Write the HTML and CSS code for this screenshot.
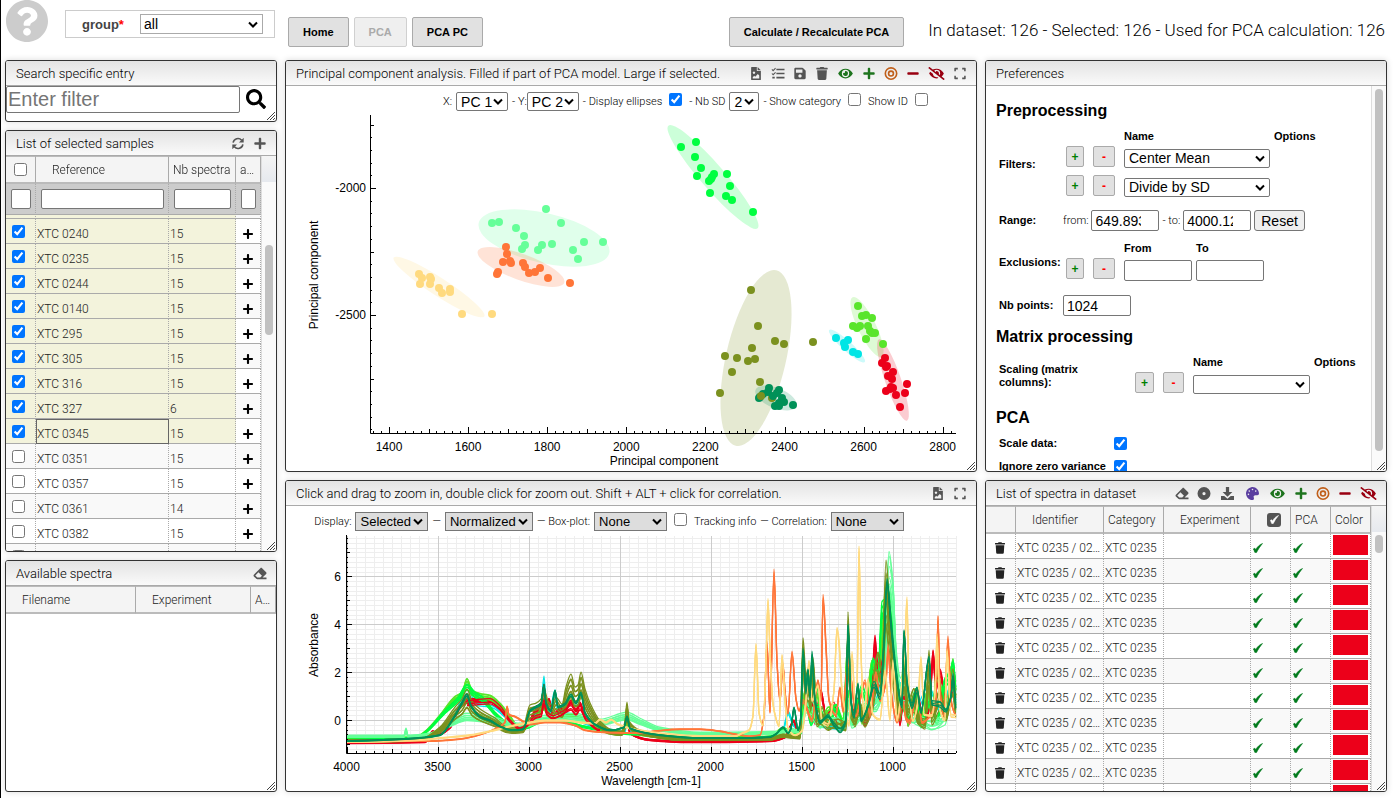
FILE: index.html
```
<!DOCTYPE html>
<html lang="en">
<head>
    <meta charset="UTF-8">
    <meta name="viewport" content="width=device-width, initial-scale=1.0">
    <title>PCA</title>
    <link rel="stylesheet" href="styles.css">
</head>
<body>
    <svg class="sprite" aria-hidden="true">
        <symbol id="i-help" viewBox="8 8 496 496"><path d="M504 256c0 136.997-111.043 248-248 248S8 392.997 8 256C8 119.083 119.043 8 256 8s248 111.083 248 248zM262.655 90c-54.497 0-89.255 22.957-116.549 63.758-3.536 5.286-2.353 12.415 2.715 16.258l34.699 26.31c5.205 3.947 12.621 3.008 16.665-2.122 17.864-22.658 30.113-35.797 57.303-35.797 20.429 0 45.698 13.148 45.698 32.958 0 14.976-12.363 22.667-32.534 33.976C247.128 238.528 216 254.941 216 296v4c0 6.627 5.373 12 12 12h56c6.627 0 12-5.373 12-12v-1.333c0-28.462 83.186-29.647 83.186-106.667 0-58.002-60.165-102-116.531-102zM256 338c-25.365 0-46 20.635-46 46 0 25.364 20.635 46 46 46s46-20.636 46-46c0-25.364-20.635-46-46-46z"/></symbol>
        <symbol id="i-search" viewBox="0 0 512 512"><path d="M505 442.7L405.3 343c-4.5-4.5-10.6-7-17-7H372c27.6-35.3 44-79.7 44-128C416 93.1 322.9 0 208 0S0 93.1 0 208s93.1 208 208 208c48.3 0 92.7-16.4 128-44v16.3c0 6.4 2.5 12.5 7 17l99.7 99.7c9.4 9.4 24.6 9.4 33.9 0l28.3-28.3c9.4-9.4 9.4-24.6.1-34zM208 336c-70.7 0-128-57.2-128-128 0-70.7 57.2-128 128-128 70.7 0 128 57.2 128 128 0 70.7-57.2 128-128 128z"/></symbol>
        <symbol id="i-sync" viewBox="0 0 16 16"><path d="M2 7a6 6 0 0 1 10.5-3M14 9a6 6 0 0 1-10.5 3" fill="none" stroke="currentColor" stroke-width="1.9"/><path d="M15 1v5.8H9.2zM1 15V9.2h5.8z"/></symbol>
        <symbol id="i-plus" viewBox="0 0 448 512"><path d="M416 208H272V64c0-17.67-14.33-32-32-32h-32c-17.67 0-32 14.33-32 32v144H32c-17.67 0-32 14.33-32 32v32c0 17.67 14.33 32 32 32h144v144c0 17.67 14.33 32 32 32h32c17.67 0 32-14.33 32-32V304h144c17.67 0 32-14.33 32-32v-32c0-17.67-14.33-32-32-32z"/></symbol>
        <symbol id="i-minus" viewBox="0 0 448 512"><path d="M416 208H32c-17.67 0-32 14.33-32 32v32c0 17.67 14.33 32 32 32h384c17.67 0 32-14.33 32-32v-32c0-17.67-14.33-32-32-32z"/></symbol>
        <symbol id="i-eye" viewBox="0 0 576 512"><path d="M572.52 241.4C518.29 135.59 410.93 64 288 64S57.68 135.64 3.48 241.41a32.35 32.35 0 0 0 0 29.19C57.71 376.41 165.07 448 288 448s230.32-71.64 284.52-177.41a32.35 32.35 0 0 0 0-29.19zM288 400a144 144 0 1 1 144-144 143.93 143.93 0 0 1-144 144zm0-240a95.31 95.31 0 0 0-25.31 3.79 47.85 47.85 0 0 1-66.9 66.9A95.78 95.78 0 1 0 288 160z"/></symbol>
        <symbol id="i-eye-slash" viewBox="0 0 640 512"><path d="M320 400c-75.85 0-137.25-58.71-142.9-133.11L72.2 185.82c-13.79 17.3-26.48 35.59-36.72 55.59a32.35 32.35 0 0 0 0 29.19C89.71 376.41 197.07 448 320 448c26.91 0 52.87-4 77.89-10.46L346 397.39a144.13 144.13 0 0 1-26 2.61zm313.82 58.1l-110.55-85.44a331.25 331.25 0 0 0 81.25-102.07 32.35 32.35 0 0 0 0-29.19C550.29 135.59 442.93 64 320 64a308.15 308.15 0 0 0-147.32 37.7L45.46 3.37A16 16 0 0 0 23 6.18L3.37 31.45A16 16 0 0 0 6.18 53.9l588.36 454.73a16 16 0 0 0 22.46-2.81l19.64-25.27a16 16 0 0 0-2.82-22.45zm-183.72-142l-39.3-30.38A94.75 94.75 0 0 0 416 256a94.76 94.76 0 0 0-121.31-92.21A47.65 47.65 0 0 1 304 192a46.64 46.64 0 0 1-1.54 10l-73.61-56.89A142.31 142.31 0 0 1 320 112a143.92 143.92 0 0 1 144 144c0 21.63-5.29 41.79-13.9 60.11z"/></symbol>
        <symbol id="i-trash" viewBox="0 0 448 512"><path d="M432 32H312l-9.4-18.7A24 24 0 0 0 281.1 0H166.8a23.72 23.72 0 0 0-21.4 13.3L136 32H16A16 16 0 0 0 0 48v32a16 16 0 0 0 16 16h416a16 16 0 0 0 16-16V48a16 16 0 0 0-16-16zM53.2 467a48 48 0 0 0 47.9 45h245.8a48 48 0 0 0 47.9-45L416 128H32z"/></symbol>
        <symbol id="i-save" viewBox="0 0 448 512"><path d="M433.941 129.941l-83.882-83.882A48 48 0 0 0 316.118 32H48C21.49 32 0 53.49 0 80v352c0 26.51 21.49 48 48 48h352c26.51 0 48-21.49 48-48V163.882a48 48 0 0 0-14.059-33.941zM224 416c-35.346 0-64-28.654-64-64s28.654-64 64-64 64 28.654 64 64-28.654 64-64 64zm96-304.52V212c0 6.627-5.373 12-12 12H76c-6.627 0-12-5.373-12-12V108c0-6.627 5.373-12 12-12h228.52c3.183 0 6.235 1.264 8.485 3.515l3.48 3.48A11.996 11.996 0 0 1 320 111.48z"/></symbol>
        <symbol id="i-expand" viewBox="0 0 448 512"><path d="M0 170V56c0-13 11-24 24-24h114v62H62v76zM310 32h114c13 0 24 11 24 24v114h-62V94h-76zM386 342h62v114c0 13-11 24-24 24H310v-62h76zM138 480H24c-13 0-24-11-24-24V342h62v76h76z"/></symbol>
        <symbol id="i-eraser" viewBox="0 0 512 512"><path d="M497.941 273.941c18.745-18.745 18.745-49.137 0-67.882l-160-160c-18.745-18.745-49.136-18.746-67.883 0l-256 256c-18.745 18.745-18.745 49.137 0 67.882l96 96A48.004 48.004 0 0 0 144 480h356c6.627 0 12-5.373 12-12v-40c0-6.627-5.373-12-12-12H355.883l142.058-142.059zm-302.627-62.627l137.373 137.373L265.373 416H150.628l-80-80 124.686-124.686z"/></symbol>
        <symbol id="i-palette" viewBox="0 0 512 512"><path d="M204.3 5C104.9 24.4 24.8 104.3 5.2 203.4c-37 187 131.7 326.4 258.8 306.7 41.2-6.4 61.4-54.6 42.5-91.7-23.1-45.4 9.9-98.4 60.9-98.4h79.7c35.8 0 64.8-29.6 64.9-65.3C511.5 97.1 368.1-26.9 204.3 5zM96 320c-17.7 0-32-14.3-32-32s14.3-32 32-32 32 14.3 32 32-14.3 32-32 32zm32-128c-17.7 0-32-14.3-32-32s14.3-32 32-32 32 14.3 32 32-14.3 32-32 32zm128-64c-17.7 0-32-14.3-32-32s14.3-32 32-32 32 14.3 32 32-14.3 32-32 32zm128 64c-17.7 0-32-14.3-32-32s14.3-32 32-32 32 14.3 32 32-14.3 32-32 32z"/></symbol>
        <symbol id="i-file" viewBox="0 0 384 512"><path fill-rule="evenodd" d="M24 0h200v136c0 13 11 24 24 24h136v328c0 13-11 24-24 24H24c-13 0-24-11-24-24V24C0 11 11 0 24 0zM256 0l128 128H256zM112 176a48 48 0 1 0 .1 0zM64 448h256V336l-56-56-104 104-40-40-56 56z"/></symbol>
        <symbol id="i-tasks" viewBox="0 0 16 16"><path d="M6 2h10v2H6zM6 7h10v2H6zM6 12h10v2H6zM1 12h3v2H1z"/><path d="M.5 3l1.5 1.5L5 1.5M.5 8L2 9.5 5 6.5" fill="none" stroke="currentColor" stroke-width="1.3"/></symbol>
        <symbol id="i-target" viewBox="0 0 16 16"><g fill="none" stroke="currentColor" stroke-width="2"><circle cx="8" cy="8" r="7"/><circle cx="8" cy="8" r="3"/></g></symbol>
        <symbol id="i-dot" viewBox="0 0 16 16"><circle cx="8" cy="8" r="5" fill="none" stroke="currentColor" stroke-width="6"/></symbol>
        <symbol id="i-download" viewBox="0 0 16 16"><path d="M6 0h4v6h4l-6 6-6-6h4zM0 11h4l4 3.5 4-3.5h4v5H0z"/></symbol>
        <symbol id="i-check" viewBox="0 0 10 10"><path d="M.3 6.2C1 5 2 5 2.9 6.6 4.3 3.8 6.5 1.6 9.5.5 7 3.5 5 6.5 3.5 9.6 2.5 9.9 2 9.7 1.7 9.3 1.4 8 1 7 .3 6.2z" stroke="currentColor" stroke-width=".6"/></symbol>
        <symbol id="i-grip" viewBox="0 0 8 8"><path d="M0 8L8 0M3 8L8 3M6 8L8 6" stroke="#444" fill="none"/></symbol>
    </svg>

    <header class="topbar">
        <div class="topbar-left">
            <a href="#" class="help" aria-label="Help"><svg><use href="#i-help"/></svg></a>
            <form class="group-form">
                <label for="group">group<span class="required">*</span></label>
                <select id="group"><option>all</option></select>
            </form>
        </div>
        <nav class="nav">
            <button type="button" class="btn">Home</button>
            <button type="button" class="btn" disabled>PCA</button>
            <button type="button" class="btn">PCA PC</button>
        </nav>
        <button type="button" class="btn">Calculate / Recalculate PCA</button>
        <div class="stats">In dataset: 126 - Selected: 126 - Used for PCA calculation: 126</div>
    </header>

    <main class="board">
        <div class="column column-left">
            <section class="panel">
                <div class="panel-head"><h1>Search specific entry</h1></div>
                <div class="search">
                    <input type="text" placeholder="Enter filter" aria-label="Filter">
                    <svg class="search-icon"><use href="#i-search"/></svg>
                </div>
                <svg class="grip"><use href="#i-grip"/></svg>
            </section>

            <section class="panel">
                <div class="panel-head">
                    <h1>List of selected samples</h1>
                    <div class="tools">
                        <svg><use href="#i-sync"/></svg>
                        <svg><use href="#i-plus"/></svg>
                    </div>
                </div>
                <div class="grid">
                    <div class="grid-view" id="samplesView">
                        <table class="samples">
                            <colgroup><col class="c-check"><col><col class="c-nb"><col class="c-add"></colgroup>
                            <thead>
                                <tr>
                                    <th class="center"><input type="checkbox" aria-label="Select all"></th>
                                    <th class="indent">Reference</th>
                                    <th>Nb spectra</th>
                                    <th>a…</th>
                                </tr>
                                <tr class="filters">
                                    <td><input type="text" aria-label="Filter selection"></td>
                                    <td><input type="text" aria-label="Filter reference"></td>
                                    <td><input type="text" aria-label="Filter nb spectra"></td>
                                    <td><input type="text" aria-label="Filter add"></td>
                                </tr>
                            </thead>
                            <tbody id="samples"></tbody>
                        </table>
                    </div>
                    <div class="scroll scroll-samples"><div class="thumb"></div></div>
                </div>
                <svg class="grip"><use href="#i-grip"/></svg>
            </section>

            <section class="panel">
                <div class="panel-head">
                    <h1>Available spectra</h1>
                    <div class="tools"><svg><use href="#i-eraser"/></svg></div>
                </div>
                <table class="available">
                    <colgroup><col><col class="c-exp"><col class="c-a"></colgroup>
                    <thead><tr><th>Filename</th><th>Experiment</th><th class="tight">A…</th></tr></thead>
                </table>
                <svg class="grip"><use href="#i-grip"/></svg>
            </section>
        </div>

        <div class="column column-mid">
            <section class="panel">
                <div class="panel-head">
                    <h1>Principal component analysis. Filled if part of PCA model. Large if selected.</h1>
                    <div class="tools">
                        <svg><use href="#i-file"/></svg>
                        <svg><use href="#i-tasks"/></svg>
                        <svg><use href="#i-save"/></svg>
                        <svg><use href="#i-trash"/></svg>
                        <svg class="green wide"><use href="#i-eye"/></svg>
                        <svg class="green"><use href="#i-plus"/></svg>
                        <svg class="orange"><use href="#i-target"/></svg>
                        <svg class="red"><use href="#i-minus"/></svg>
                        <svg class="red wide"><use href="#i-eye-slash"/></svg>
                        <svg><use href="#i-expand"/></svg>
                    </div>
                </div>
                <div class="options pca-options">
                    <label for="pcx">X:</label>
                    <select id="pcx" class="w52"><option>PC 1</option></select>
                    <label for="pcy" class="snug">- Y:</label>
                    <select id="pcy" class="w52"><option>PC 2</option></select>
                    <label for="ellipses">- Display ellipses</label>
                    <input type="checkbox" id="ellipses" checked>
                    <label for="sd">- Nb SD</label>
                    <select id="sd" class="w30"><option>2</option></select>
                    <label for="cat">- Show category</label>
                    <input type="checkbox" id="cat">
                    <label for="showid">Show ID</label>
                    <input type="checkbox" id="showid">
                </div>
                <svg class="chart" id="pca" viewBox="286 112 690 359"></svg>
                <svg class="grip"><use href="#i-grip"/></svg>
            </section>

            <section class="panel">
                <div class="panel-head">
                    <h1>Click and drag to zoom in, double click for zoom out. Shift + ALT + click for correlation.</h1>
                    <div class="tools">
                        <svg><use href="#i-file"/></svg>
                        <svg><use href="#i-expand"/></svg>
                    </div>
                </div>
                <div class="options spectra-options">
                    <label for="display">Display:</label>
                    <select id="display" class="w73"><option>Selected</option></select>
                    <span>—</span>
                    <select class="w88" aria-label="Scaling"><option>Normalized</option></select>
                    <label for="box">— Box-plot:</label>
                    <select id="box" class="w73"><option>None</option></select>
                    <input type="checkbox" id="tracking">
                    <label for="tracking">Tracking info</label>
                    <label for="corr">— Correlation:</label>
                    <select id="corr" class="w73"><option>None</option></select>
                </div>
                <svg class="chart" id="spectra" viewBox="286 532 690 259"></svg>
                <svg class="grip"><use href="#i-grip"/></svg>
            </section>
        </div>

        <div class="column column-right">
            <section class="panel">
                <div class="panel-head"><h1>Preferences</h1></div>
                <div class="grid">
                    <form class="prefs">
                        <h2>Preprocessing</h2>
                        <div class="field">
                            <b>Filters:</b>
                            <div class="items">
                                <b class="on-name">Name</b><b>Options</b>
                                <button type="button" class="add">+</button><button type="button" class="del">-</button>
                                <select aria-label="Filter 1"><option>Center Mean</option></select><span></span>
                                <button type="button" class="add">+</button><button type="button" class="del">-</button>
                                <select aria-label="Filter 2"><option>Divide by SD</option></select><span></span>
                            </div>
                        </div>
                        <div class="field range-field">
                            <b>Range:</b>
                            <div class="inline">
                                <label for="from">from:</label>
                                <input type="text" id="from" class="clip" value="649.893">
                                <label for="to">- to:</label>
                                <input type="text" id="to" class="clip" value="4000.12">
                                <button type="button" class="reset">Reset</button>
                            </div>
                        </div>
                        <div class="field">
                            <b>Exclusions:</b>
                            <div class="items exclusions">
                                <b class="on-name">From</b><b>To</b>
                                <button type="button" class="add">+</button><button type="button" class="del">-</button>
                                <input type="text" aria-label="Exclusion from"><input type="text" aria-label="Exclusion to">
                            </div>
                        </div>
                        <div class="field points-field">
                            <label for="nb"><b>Nb points:</b></label>
                            <div class="inline"><input type="text" id="nb" value="1024"></div>
                        </div>
                        <h2 class="h-matrix">Matrix processing</h2>
                        <div class="field matrix">
                            <b>Scaling (matrix columns):</b>
                            <div class="items">
                                <b class="on-name">Name</b><b>Options</b>
                                <button type="button" class="add">+</button><button type="button" class="del">-</button>
                                <select aria-label="Scaling"><option></option></select><span></span>
                            </div>
                        </div>
                        <h2 class="h-pca">PCA</h2>
                        <div class="field tick">
                            <label for="scale"><b>Scale data:</b></label>
                            <input type="checkbox" id="scale" checked>
                        </div>
                        <div class="field tick">
                            <label for="ignore"><b>Ignore zero variance</b></label>
                            <input type="checkbox" id="ignore" checked>
                        </div>
                    </form>
                    <div class="scroll scroll-prefs"><div class="thumb"></div></div>
                </div>
                <svg class="grip"><use href="#i-grip"/></svg>
            </section>

            <section class="panel">
                <div class="panel-head">
                    <h1>List of spectra in dataset</h1>
                    <div class="tools">
                        <svg><use href="#i-eraser"/></svg>
                        <svg><use href="#i-dot"/></svg>
                        <svg class="wide"><use href="#i-download"/></svg>
                        <svg class="purple wide"><use href="#i-palette"/></svg>
                        <svg class="green wide"><use href="#i-eye"/></svg>
                        <svg class="green"><use href="#i-plus"/></svg>
                        <svg class="orange"><use href="#i-target"/></svg>
                        <svg class="red"><use href="#i-minus"/></svg>
                        <svg class="red wide"><use href="#i-eye-slash"/></svg>
                    </div>
                </div>
                <div class="grid">
                    <div class="grid-view">
                        <table class="dataset">
                            <colgroup><col class="c-check"><col class="c-id"><col class="c-cat"><col><col class="c-sel"><col class="c-sel"><col class="c-sel"></colgroup>
                            <thead>
                                <tr>
                                    <th></th>
                                    <th class="indent">Identifier</th>
                                    <th>Category</th>
                                    <th class="indent">Experiment</th>
                                    <th class="right"><span class="ticked"><svg><use href="#i-check"/></svg></span></th>
                                    <th>PCA</th>
                                    <th>Color</th>
                                </tr>
                            </thead>
                            <tbody id="dataset"></tbody>
                        </table>
                    </div>
                    <div class="scroll scroll-dataset"><div class="thumb"></div></div>
                </div>
                <svg class="grip"><use href="#i-grip"/></svg>
            </section>
        </div>
    </main>

    <script src="script.js"></script>
</body>
</html>
```
FILE: styles.css
```
* {
    box-sizing: border-box;
}
body {
    margin: 0;
    height: 100vh;
    min-height: 600px;
    display: flex;
    flex-direction: column;
    border-left: 1px solid #000;
    background-color: #fff;
    font-family: Roboto, "Liberation Sans", sans-serif;
    font-weight: 300;
    font-size: 11px;
    color: #000;
}
svg {
    fill: currentColor;
}
.sprite {
    position: absolute;
    width: 0;
    height: 0;
}
input, select, button {
    font-family: "Liberation Sans", Arial, sans-serif;
    margin: 0;
}
input[type="text"] {
    border: 1px solid #767676;
    border-radius: 2px;
    min-width: 0;
}
input[type="checkbox"] {
    width: 13px;
    height: 13px;
}
select {
    appearance: none;
    height: 19px;
    padding: 0 4px;
    border: 1px solid #767676;
    border-radius: 2px;
    color: #000;
    background: #fff url("data:image/svg+xml,%3Csvg xmlns='http://www.w3.org/2000/svg' viewBox='0 0 10 7'%3E%3Cpath d='M1 1.5l4 4 4-4' fill='none' stroke='%23000' stroke-width='2'/%3E%3C/svg%3E") no-repeat right 4px center / 10px 7px;
    font-size: 14px;
}

/* top bar */
.topbar {
    height: 60px;
    flex: none;
    display: flex;
    align-items: flex-start;
    padding: 0 13px 0 5px;
}
.topbar-left {
    display: flex;
    width: 282px;
}
.help {
    color: #ccc;
    height: 42px;
}
.help svg {
    width: 42px;
    height: 42px;
}
.group-form {
    display: flex;
    align-items: center;
    width: 210px;
    height: 28px;
    margin: 10px 0 0 17px;
    padding: 0 11px 0 16px;
    border: 1px solid #ccc;
}
.group-form label {
    flex: 1;
    font: bold 13px "Liberation Sans", sans-serif;
    color: #444;
}
.group-form select {
    width: 123px;
    height: 20px;
    padding-left: 3px;
    border-color: #aaa;
    border-radius: 0;
}
.required {
    color: #f00;
}
.nav {
    display: flex;
    gap: 5px;
    flex: 1;
}
.btn {
    height: 30px;
    margin-top: 17px;
    padding: 0 14px;
    border: 1px solid #aaa;
    border-radius: 2px;
    background-color: #e1e1e1;
    color: #000;
    font-size: 11px;
    font-weight: bold;
}
.btn:disabled {
    border-color: #d0d0d0;
    background-color: #efefef;
    color: #aaa;
}
.stats {
    margin: 20px 0 0 24px;
    font-size: 17px;
    line-height: 20px;
    white-space: nowrap;
}

/* board */
.board {
    flex: 1;
    min-height: 0;
    display: grid;
    grid-template-columns: 272px minmax(0, 1fr) 402px;
    gap: 8px;
    padding: 0 11px 6px 4px;
}
.column {
    display: grid;
    gap: 8px;
    min-height: 0;
}
.column-left {
    grid-template-rows: 62px minmax(0, 422fr) minmax(0, 232fr);
}
.column-mid, .column-right {
    grid-template-rows: minmax(0, 412fr) minmax(0, 312fr);
}
.panel {
    position: relative;
    display: flex;
    flex-direction: column;
    min-width: 0;
    overflow: hidden;
    border: 1px solid #333;
    border-radius: 3px;
    background-color: #fff;
    box-shadow: 0 0 6px rgba(0, 0, 0, 0.15);
}
.panel-head {
    flex: none;
    display: flex;
    align-items: center;
    justify-content: space-between;
    height: 25px;
    padding: 0 9px 0 10px;
    border-bottom: 1px solid #aaa;
    background: linear-gradient(#e3e3e3, #fafafa);
}
.panel-head h1 {
    margin: 0;
    font-size: 13px;
    font-weight: 300;
    white-space: nowrap;
}
.tools {
    display: flex;
    align-items: center;
    gap: 8px;
    color: #555;
}
.tools svg {
    width: 14px;
    height: 13px;
}
.tools .wide {
    width: 17px;
}
.green {
    color: #1e741e;
}
.orange {
    color: #c05f1a;
}
.red {
    color: #990011;
}
.purple {
    color: #5b3fa0;
}
.grip {
    position: absolute;
    right: 1px;
    bottom: 1px;
    width: 8px;
    height: 8px;
}

.search {
    display: flex;
    gap: 6px;
}
.search input {
    width: 234px;
    height: 27px;
    padding: 0 1px;
    font-size: 20px;
}
.search-icon {
    width: 20px;
    height: 20px;
    margin-top: 3px;
}

/* tables */
.grid {
    flex: 1;
    min-height: 0;
    display: flex;
}
.grid-view {
    flex: 1;
    min-width: 0;
    overflow: hidden;
}
table {
    width: 100%;
    table-layout: fixed;
    border-collapse: separate;
    border-spacing: 0;
    font-size: 12px;
    color: #222;
}
thead {
    position: sticky;
    top: 0;
    z-index: 1;
}
th {
    height: 28px;
    padding: 0 4px;
    border-top: 1px solid #bbb;
    border-bottom: 2px solid #bbb;
    border-right: 1px solid #aaa;
    background-color: #f4f4f4;
    font-weight: 300;
    text-align: left;
    white-space: nowrap;
}
td {
    height: 25px;
    padding: 5px 0 0 1px;
    border-bottom: 1px solid #aaa;
    border-right: 1px dotted #aaa;
    line-height: 18px;
    white-space: nowrap;
    overflow: hidden;
    text-overflow: ellipsis;
}
th.indent {
    padding-left: 16px;
}
th.center {
    padding-top: 3px;
    text-align: center;
}
th.right {
    text-align: right;
    padding-right: 9px;
}
td svg {
    display: block;
}
.filters td {
    height: 31px;
    padding: 0 4px 0 5px;
    background-color: #ccc;
}
.filters input {
    display: block;
    width: 100%;
    height: 20px;
}
.c-check {
    width: 30px;
}
.c-nb {
    width: 67px;
}
.c-add {
    width: 25px;
}
.samples tbody tr:nth-child(odd) td {
    background-color: #f9f9f9;
}
.samples tbody tr.on td:not(:last-child) {
    background-color: #f3f3dc;
}
.samples tbody td:first-child {
    padding: 0;
    text-align: center;
}
.samples tbody td input {
    display: block;
    margin: 0 0 0 6px;
}
.samples tbody td:last-child {
    background-color: #fff;
    color: #000;
    padding-left: 7px;
}
.samples td svg {
    width: 10px;
    height: 12px;
}
.samples tbody td.active {
    outline: 1px solid #666;
    outline-offset: -1px;
}
.available th {
    padding-left: 16px;
}
.available th.tight {
    padding-left: 4px;
}
.c-exp {
    width: 115px;
}
.c-a {
    width: 25px;
}
.c-id {
    width: 88px;
}
.c-cat {
    width: 60px;
}
.c-sel {
    width: 40px;
}
.dataset tbody tr:nth-child(even) td {
    background-color: #f9f9f9;
}
.dataset td {
    padding-top: 4px;
}
.dataset td svg {
    width: 10px;
    height: 12px;
    margin-left: 8px;
    color: #222;
}
.dataset td svg.ok {
    height: 10px;
    margin-left: 1px;
    color: #007a1c;
}
.dataset td.swatch {
    padding: 0 2px 2px;
}
.swatch div {
    height: 20px;
    background-color: #ec001a;
}
.ticked {
    display: inline-flex;
    align-items: center;
    justify-content: center;
    width: 14px;
    height: 14px;
    border-radius: 3px;
    background-color: #555;
    color: #fff;
    vertical-align: middle;
}
.ticked svg {
    width: 9px;
    height: 9px;
}
.scroll {
    flex: none;
    width: 15px;
    padding-left: 3px;
    border-left: 1px solid #ddd;
    background-color: #fafafa;
}
.scroll-samples, .scroll-dataset {
    background: linear-gradient(#f4f4f4, #e6e9ee) no-repeat #fafafa;
    background-size: 100% 26px;
}
.thumb {
    width: 8px;
    border-radius: 4px;
    background-color: #c1c1c1;
}
.scroll-samples .thumb {
    height: 90px;
    margin-top: 89px;
}
.scroll-dataset .thumb {
    height: 18px;
    margin-top: 29px;
}
.scroll-prefs .thumb {
    height: 94%;
    margin-top: 3px;
}

/* charts */
.options {
    flex: none;
    display: flex;
    align-items: center;
    justify-content: center;
    gap: 4px;
    height: 26px;
    padding-top: 5px;
    color: #000;
    white-space: nowrap;
}
.pca-options {
    padding-left: 112px;
}
.spectra-options {
    padding-right: 44px;
}
.options .snug {
    margin-right: -4px;
}
.options input {
    margin: 0 3px 4px 3px;
}
.w52 {
    width: 52px;
}
.w30 {
    width: 30px;
}
.w73 {
    width: 73px;
}
.w88 {
    width: 88px;
}
.spectra-options select {
    background-color: #ddd;
    border-radius: 0;
    font-size: 13px;
}
.chart {
    flex: 1;
    min-height: 0;
    width: 100%;
    font-family: "Liberation Sans", Arial, sans-serif;
    font-weight: 400;
    font-size: 12px;
}
.axis {
    fill: none;
    stroke: #000;
}
.minor {
    stroke: #eee;
}
.major {
    stroke: #ccc;
}
.middle {
    text-anchor: middle;
}
.end {
    text-anchor: end;
}
.line {
    fill: none;
    stroke-width: 1.3;
    stroke-linejoin: round;
}

/* preferences */
.prefs {
    flex: 1;
    min-width: 0;
    padding: 0 8px 0 10px;
    overflow: hidden;
}
.prefs h2 {
    margin: 15px 0 9px;
    font: bold 16px/20px "Liberation Sans", sans-serif;
}
.prefs b {
    font: bold 11px/13px "Liberation Sans", sans-serif;
}
.field {
    display: grid;
    grid-template-columns: 64px 1fr;
    align-items: center;
    padding-left: 3px;
}
.items {
    display: grid;
    grid-template-columns: 18px 22px 146px 1fr;
    gap: 5px 9px;
    padding-left: 3px;
    align-items: center;
}
.items b {
    margin-bottom: -2px;
}
.items .on-name {
    grid-column: 3;
}
.items b:nth-child(2), .exclusions input:last-child {
    margin-left: -5px;
}
.exclusions {
    grid-template-columns: 18px 22px 68px 68px;
}
.matrix {
    grid-template-columns: 133px 1fr;
}
.matrix .items {
    grid-template-columns: 19px 21px 117px 1fr;
}
.prefs input[type="text"] {
    width: 68px;
    height: 21px;
    padding: 0 3px;
    font-size: 14px;
}
.prefs input.clip {
    padding-right: 17px;
}
.add, .del {
    height: 21px;
    margin-bottom: 3px;
    padding: 0;
    border: 1px solid #aaa;
    border-radius: 2px;
    background-color: #e1e1e1;
    color: #008000;
    font-size: 12px;
    font-weight: bold;
}
.del {
    color: #f00;
}
.inline {
    display: flex;
    align-items: center;
    gap: 3px;
}
.range-field {
    margin: 11px 0;
}
.points-field {
    margin-top: 13px;
}
.prefs h2.h-matrix {
    margin-top: 11px;
}
.prefs h2.h-pca {
    margin: 12px 0 4px;
}
.reset {
    height: 21px;
    padding: 0 6px;
    border: 1px solid #767676;
    border-radius: 3px;
    background-color: #efefef;
    color: #000;
    font-size: 14px;
}
.tick {
    grid-template-columns: 115px 1fr;
    height: 23px;
}
```
FILE: script.js
```
const samples = [
    ['XTC 0236', 15, true], ['XTC 0240', 15, true], ['XTC 0235', 15, true], ['XTC 0244', 15, true],
    ['XTC 0140', 15, true], ['XTC 295', 15, true], ['XTC 305', 15, true], ['XTC 316', 15, true],
    ['XTC 327', 6, true], ['XTC 0345', 15, true], ['XTC 0351', 15], ['XTC 0357', 15],
    ['XTC 0361', 14], ['XTC 0382', 15], ['XTC 0390', 15]
];

document.getElementById('samples').innerHTML = samples.map(([name, nb, on]) => `
    <tr class="${on ? 'on' : ''}">
        <td><input type="checkbox" aria-label="${name}" ${on ? 'checked' : ''}></td>
        <td class="${name === 'XTC 0345' ? 'active' : ''}">${name}</td>
        <td>${nb}</td>
        <td><svg><use href="#i-plus"/></svg></td>
    </tr>`).join('');
document.getElementById('samplesView').scrollTop = 21;

document.getElementById('dataset').innerHTML = Array.from({ length: 11 }, () => `
    <tr>
        <td><svg><use href="#i-trash"/></svg></td>
        <td>XTC 0235 / 02…</td>
        <td>XTC 0235</td>
        <td></td>
        <td><svg class="ok"><use href="#i-check"/></svg></td>
        <td><svg class="ok"><use href="#i-check"/></svg></td>
        <td class="swatch"><div></div></td>
    </tr>`).join('');

// PCA scatter: ellipse is [cx, cy, rx, ry, angle]
const groups = [
    { color: '#ffda7f', ellipse: [439, 287, 54, 9, 33], points: [[419, 274], [422, 278], [420, 284], [430, 277], [431, 279], [430, 284], [439, 288], [442, 293], [450, 289], [450, 292], [462, 314], [492, 314]] },
    { color: '#66ff99', ellipse: [544, 238, 67, 25, 13], points: [[492, 223], [499, 222], [516, 228], [524, 236], [525, 245], [522, 249], [546, 209], [561, 223], [542, 245], [538, 250], [552, 244], [573, 250], [584, 242], [578, 259], [603, 242]] },
    { color: '#ff7538', ellipse: [521, 267, 46, 13, 20], points: [[506, 247], [507, 254], [503, 262], [510, 261], [511, 263], [498, 272], [497, 274], [523, 263], [525, 267], [529, 273], [535, 272], [540, 268], [548, 278], [570, 283]] },
    { color: '#00ff40', ellipse: [713, 177, 68, 12, 49], points: [[681, 147], [696, 142], [695, 157], [701, 168], [697, 176], [714, 174], [712, 177], [711, 179], [709, 181], [727, 174], [730, 186], [710, 193], [726, 196], [732, 200], [753, 212]] },
    { color: '#7b911f', ellipse: [756, 358, 90, 30, -77], points: [[751, 290], [758, 326], [775, 341], [784, 344], [813, 342], [752, 348], [725, 356], [737, 358], [748, 361], [755, 359], [732, 372], [760, 382], [720, 393], [772, 398]] },
    { color: '#009158', ellipse: [776, 398, 22, 10, 22], points: [[769, 388], [779, 390], [760, 397], [763, 394], [759, 398], [768, 392], [773, 396], [782, 398], [784, 402], [775, 406], [779, 406], [793, 405], [777, 393], [779, 403]] },
    { color: '#00e5e5', ellipse: [847, 346, 24, 5, 42], points: [[836, 338], [848, 340], [844, 343], [845, 347], [853, 352], [858, 354]] },
    { color: '#59e52b', ellipse: [867, 327, 33, 9, 64], points: [[858, 306], [862, 316], [866, 315], [872, 318], [853, 326], [857, 328], [860, 326], [868, 326], [870, 331], [872, 333], [875, 333], [866, 339], [883, 344]] },
    { color: '#ec001a', ellipse: [893, 380, 43, 8, 71], points: [[885, 358], [882, 363], [887, 366], [886, 367], [893, 372], [888, 376], [892, 379], [891, 387], [886, 391], [890, 389], [893, 388], [896, 395], [907, 384], [905, 393], [900, 407]] }
];

function text(x, y, value, cls, extra) {
    return `<text x="${x}" y="${y}" class="${cls}" ${extra || ''}>${value}</text>`;
}

function drawPca() {
    const px = v => 389 + (v - 1400) * 0.3955;
    const py = v => 188 + (-2000 - v) * 0.254;
    let out = '';
    groups.forEach(g => {
        const [cx, cy, rx, ry, a] = g.ellipse;
        out += `<ellipse cx="${cx}" cy="${cy}" rx="${rx}" ry="${ry}" fill="${g.color}" opacity="0.2" transform="rotate(${a} ${cx} ${cy})"/>`;
    });
    groups.forEach(g => {
        g.points.forEach(([x, y]) => {
            out += `<circle cx="${x}" cy="${y}" r="4" fill="${g.color}"/>`;
        });
    });
    out += '<circle cx="761" cy="396" r="4" fill="#7b911f"/>';
    let d = 'M370.5 115V433.5H956';
    for (let v = 1360; v <= 2820; v += 20) {
        const len = v % 200 === 0 ? 6 : v % 100 === 0 ? 4 : 2;
        d += `M${Math.round(px(v)) + 0.5} 433v-${len}`;
        if (v % 200 === 0) out += text(px(v), 451, v, 'middle');
    }
    for (let v = -1750; v >= -2950; v -= 50) {
        const len = v % 500 === 0 ? 6 : v % 250 === 0 ? 4 : 2;
        d += `M370 ${Math.round(py(v)) + 0.5}h${len}`;
        if (v % 500 === 0) out += text(366, py(v) + 4, v, 'end');
    }
    out += `<path class="axis" d="${d}"/>`;
    out += text(664, 465, 'Principal component', 'middle');
    out += text(0, 0, 'Principal component', 'middle', 'transform="translate(318 275) rotate(-90)"');
    document.getElementById('pca').innerHTML = out;
}

// Spectra, flat lists of x,y. n = number of curves, spread = how far they fan out
const spectra = [
    { color: '#00e5e5', n: 3, spread: 0.2, d: [347,741,420,740,440,733,455,713,467,690,475,700,492,703,505,714,520,728,528,722,536,712,541,706,544,676,546,703,550,709,555,690,558,708,565,712,575,715,585,722,600,727,625,731,627,718,630,731,660,736,740,739,770,737,783,730,788,711,794,725,800,728,804,700,812,680,820,722,845,724,848,650,852,720,870,705,880,680,887,600,895,680,904,680,912,715,929,690,940,710,950,680,953,659,956,690] },
    { color: '#ec001a', n: 6, spread: 0.12, d: [347,743,425,742,433,731,437,735,450,727,460,705,467,699,475,698,490,698,500,705,510,719,522,730,528,724,535,710,541,706,544,684,546,706,549,698,553,714,560,708,565,708,571,700,576,709,580,702,585,716,600,728,620,733,625,726,627,716,630,733,650,740,690,742,770,741,785,737,794,720,798,735,802,725,806,690,810,680,815,720,821,690,826,715,834,705,838,722,846,722,848,660,852,715,858,700,865,722,870,705,873,665,875,638,877,660,880,670,884,640,887,600,891,630,896,680,900,722,904,690,908,722,917,690,921,710,925,722,930,700,933,651,936,682,940,668,944,690,950,705,953,680,956,695] },
    { color: '#59e52b', n: 6, spread: 0.14, d: [347,738,415,738,425,732,440,715,455,696,462,692,467,678,472,690,480,693,490,695,500,703,510,716,520,728,528,725,536,716,544,706,550,718,560,717,571,714,580,716,590,722,600,729,620,734,627,724,640,734,680,738,770,737,783,728,795,733,801,725,804,695,808,680,812,715,817,690,822,720,828,708,836,705,843,722,848,640,852,718,858,700,862,720,868,690,872,660,877,675,881,650,886,585,890,610,895,670,900,700,904,660,908,722,912,700,920,722,928,690,932,715,937,670,942,690,947,700,953,662,956,690] },
    { color: '#00ff40', n: 6, spread: 0.15, d: [347,737,400,738,415,738,425,732,445,710,458,697,467,684,475,692,483,697,495,712,510,724,525,727,540,720,550,717,565,720,580,725,600,729,625,733,660,735,740,738,775,736,783,728,795,734,801,730,806,700,811,720,818,705,828,724,836,707,843,724,848,690,853,722,862,688,868,700,873,657,878,670,882,605,886,600,890,590,896,665,902,700,908,715,916,690,921,722,930,700,937,720,945,680,950,670,953,659,956,685] },
    { color: '#66ff99', n: 8, spread: 0.3, d: [347,736,404,736,406,729,408,736,430,734,450,722,467,714,490,717,520,724,545,716,575,714,585,716,600,720,627,713,640,719,660,728,700,733,780,732,790,729,800,731,803,720,806,700,812,705,820,722,835,715,843,724,848,700,852,720,866,705,876,700,882,680,885,640,889,553,893,580,896,645,900,680,906,685,912,715,920,718,932,722,945,715,950,690,953,672,956,700] },
    { color: '#7b911f', n: 9, spread: 0.42, d: [347,741,420,740,440,728,455,708,462,700,467,690,472,702,480,710,495,719,507,728,515,729,523,728,530,706,536,704,541,700,544,690,548,702,552,706,556,698,562,705,566,688,571,675,575,688,578,686,581,673,585,690,590,704,600,722,610,730,622,732,625,722,627,703,629,722,640,731,680,739,770,739,783,735,800,737,803,637,806,680,808,670,811,695,813,655,817,715,822,710,828,722,838,720,846,722,848,616,851,700,855,718,859,700,865,715,872,690,878,650,882,665,886,562,889,600,893,650,900,710,904,660,908,705,914,690,918,715,925,720,929,653,932,710,940,690,946,710,953,670,956,700] },
    { color: '#ec001a', n: 3, spread: 0.2, d: [467,701,475,700,490,699,500,706,510,720,520,728,528,724,535,716,541,714,544,700,547,712,553,716,562,712,571,706,576,712,580,706,586,718,600,730] },
    { color: '#ff7538', n: 3, spread: 0.06, d: [347,741,400,741,430,741,460,739,475,736,490,731,500,726,505,722,507,706,509,714,515,716,530,724,545,722,560,722,575,725,585,730,600,732,640,733,655,731,680,729,700,729,720,731,735,734,750,736,760,735,764,715,767,641,770,712,774,569,777,660,780,700,783,663,785,690,788,713,792,651,796,698,799,710,803,700,812,720,818,680,821,700,823,594,826,645,829,700,836,715,840,686,843,710,848,660,850,668,856,715,865,680,870,715,876,672,880,700,886,680,888,646,891,690,897,722,903,700,906,718,910,722,917,690,922,722,930,715,936,700,938,616,940,690,944,715,948,637,951,700,956,715] },
    { color: '#ffda7f', n: 3, spread: 0.06, d: [347,742,420,740,440,738,470,735,490,731,510,726,525,723,545,720,565,720,580,722,595,723,600,719,606,722,611,719,618,724,630,728,640,730,660,733,700,736,735,736,742,733,749,730,753,715,756,643,759,712,763,725,766,660,768,598,770,650,773,703,776,718,779,726,782,654,785,700,788,728,795,735,802,730,806,700,809,661,812,700,818,684,822,720,828,725,834,690,837,626,839,640,842,690,845,710,849,725,852,651,855,700,857,690,859,545,861,650,864,715,868,680,873,715,880,719,885,670,890,719,893,660,897,720,902,680,905,640,907,598,909,690,913,720,918,700,921,658,924,715,932,715,935,690,937,635,940,710,945,720,947,648,951,715,956,716] },
    { color: '#009158', n: 4, spread: 0.08, d: [347,741,405,739,440,735,455,715,462,702,467,694,471,705,480,716,490,720,500,726,512,730,523,729,530,710,536,706,541,703,544,684,546,702,551,710,555,690,558,706,565,703,571,694,576,702,581,692,585,712,595,724,610,730,624,727,627,716,630,728,660,735,700,738,740,738,770,737,777,733,783,727,788,733,791,728,794,707,798,730,801,715,803,650,806,690,808,668,810,695,812,653,815,700,820,722,828,715,834,724,840,730,846,720,848,622,851,700,854,715,858,684,861,720,868,705,874,683,880,695,884,640,887,577,891,620,896,670,902,705,904,628,907,680,912,705,917,688,921,712,929,655,932,702,940,703,946,710,951,695,953,674,956,705] }
];

// cubic path through the points without overshooting the peaks
function smooth(pts) {
    const slope = i => (pts[i + 1][1] - pts[i][1]) / (pts[i + 1][0] - pts[i][0]);
    const tan = pts.map((p, i) => {
        if (i === 0 || i === pts.length - 1) return 0;
        const a = slope(i - 1), b = slope(i);
        return a * b <= 0 ? 0 : 2 * a * b / (a + b);
    });
    let d = `M${pts[0][0]} ${pts[0][1]}`;
    for (let i = 1; i < pts.length; i++) {
        const [x0, y0] = pts[i - 1], [x1, y1] = pts[i], h = (x1 - x0) / 3;
        d += `C${x0 + h} ${y0 + tan[i - 1] * h} ${x1 - h} ${y1 - tan[i] * h} ${x1} ${y1}`;
    }
    return d;
}

function drawSpectra() {
    const px = v => 346.5 + (4000 - v) * 0.182;
    const py = v => 720 - v * 23.95;
    let out = '', minor = '', major = '', axis = 'M346.5 535V753.5H956';
    for (let v = 4000; v >= 650; v -= 50) {
        const x = Math.round(px(v)) + 0.5;
        if (v % 500 === 0) {
            major += `M${x} 536V753`;
            out += text(px(v), 771, v, 'middle');
        } else {
            minor += `M${x} 536V753`;
        }
        axis += `M${x} 753v-${v % 500 === 0 ? 6 : v % 250 === 0 ? 4 : 2}`;
    }
    for (let i = -6; i <= 38; i++) {
        const y = Math.round(py(i / 5)) + 0.5;
        if (i % 10 === 0) {
            major += `M347 ${y}H956`;
            out += text(341, y + 4, i / 5, 'end');
        } else {
            minor += `M347 ${y}H956`;
        }
        axis += `M346 ${y}h${i % 10 === 0 ? 6 : i % 5 === 0 ? 4 : 2}`;
    }
    out = `<path class="minor" d="${minor}"/><path class="major" d="${major}"/>` + out;
    spectra.forEach((s, k) => {
        for (let j = 0; j < s.n; j++) {
            const scale = 1 - s.spread * j / s.n;
            const pts = [];
            for (let i = 0; i < s.d.length; i += 2) {
                const x = s.d[i];
                const y = 740 + (s.d[i + 1] - 740) * scale;
                const noise = x > 800 ? Math.sin(i * 7 + j * 5 + k) * 4 : Math.sin(j * 3 + k);
                pts.push([x, y + noise * Math.min(1, s.spread * 6)]);
            }
            out += `<path class="line" stroke="${s.color}" d="${smooth(pts)}"/>`;
        }
    });
    out += `<path class="axis" d="${axis}"/>`;
    out += text(651, 785, 'Wavelength [cm-1]', 'middle');
    out += text(0, 0, 'Absorbance', 'middle', 'transform="translate(318 645) rotate(-90)"');
    document.getElementById('spectra').innerHTML = out;
}

drawPca();
drawSpectra();
```
